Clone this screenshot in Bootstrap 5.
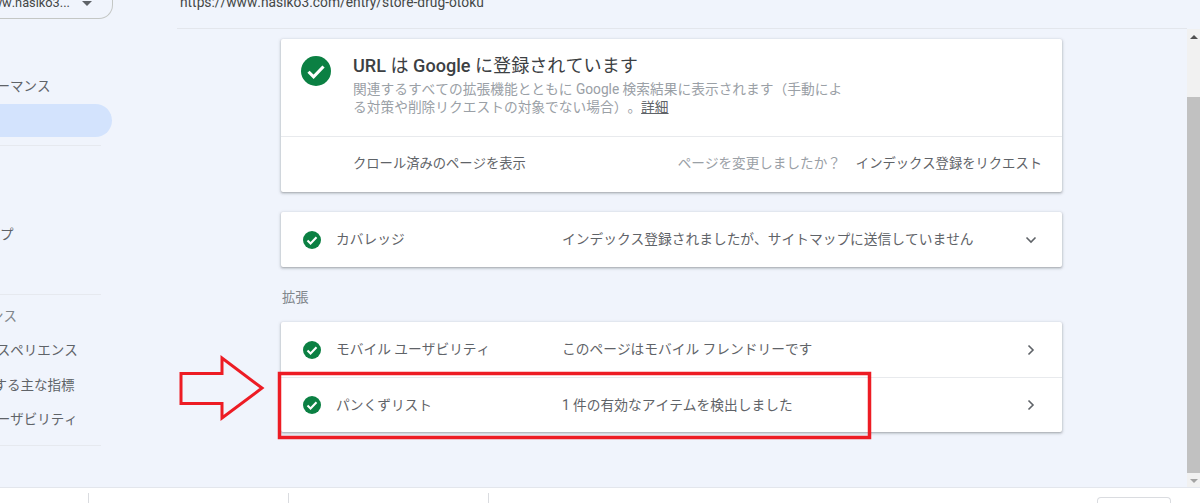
<!DOCTYPE html>
<html lang="ja">
<head>
<meta charset="utf-8">
<title>URL 検査</title>
<link rel="stylesheet" href="https://cdn.jsdelivr.net/npm/bootstrap@5.3.0/dist/css/bootstrap.min.css">
<style>
html,body{height:503px;overflow:hidden}
body{background:#f0f4fc;font-family:"Roboto","Noto Sans CJK JP",sans-serif;font-size:13.3px;color:#5f6368;text-spacing-trim:space-all;font-kerning:none}
.shell{position:relative;height:503px;overflow:hidden}
.upper{height:487px}
.sidebar{width:177px;flex:none;overflow:hidden}
.prop-select{width:113px;height:19px;border:1px solid #c4c7c5;border-left:0;border-top:0;border-bottom-right-radius:14px;font-size:12.8px;line-height:6px;color:#444746;padding-right:20px;white-space:nowrap}
.prop-text{margin-left:-60px;flex:none}
.caret{width:0;height:0;flex:none;border-left:5px solid transparent;border-right:5px solid transparent;border-top:5px solid #5f6368;margin:1px 0 0 auto}
.side-list{width:112px;margin-top:50px}
.side-row{height:34.5px;line-height:34.5px;white-space:nowrap;font-size:13.5px}
.side-row span{display:block;margin-left:-74px;color:#5f6368}
.side-row .lead-item{margin-left:-71px}
.side-row .nudge{margin-left:-67.5px}
.side-row .head{margin-left:-91px;color:#80868b}
.pill{height:33px;background:#d3e3fd;border-radius:0 17px 17px 0}
.side-rule{height:1px;background:#e6e9ef;width:101px;margin-top:8px}
.after-rule{margin-top:2px}
.mid{min-width:0}
.url-bar{height:29px;border-bottom:1px solid #e3e6ec;padding-left:3px;font-size:13.8px;line-height:4px;color:#444746;white-space:nowrap}
.col-wrap{width:781px;margin-left:104px}
.panel{background:#fff;border-radius:2px;box-shadow:0 1px 2px rgba(60,64,67,.3),0 1px 3px 1px rgba(60,64,67,.15)}
.panel-top{height:98px;padding:16px 20px 0 20px;border-bottom:1px solid #e8eaed}
.panel-foot{height:55px;padding:0 20px 2px 72px}
.big-check{width:30px;height:30px;flex:none;margin-top:1px}
.msg{margin-left:22px;width:495px}
.msg-title{font-size:18.1px;line-height:22px;color:#3c4043}
.msg-sub{font-size:13.72px;line-height:18px;color:#9aa0a6;margin-top:3px}
.msg-sub a{color:#5f6368}
.muted-q{color:#9aa0a6;margin-right:15px;font-size:13.6px}
.one-row{height:55px;padding-left:22px;padding-right:21px;font-size:13.72px}
.one-row+.one-row{border-top:1px solid #e8eaed}
.small-check{width:18px;height:18px;flex:none}
.one-name{width:226px;margin-left:15px;flex:none}
.one-val{flex:1 1 auto}
.chev{width:20px;height:20px;flex:none}
.ext-label{color:#80868b;margin:22px 0 15px 1px;line-height:18px;height:18px}
.gap-one{margin-top:20px}
.top-one{margin-top:10px}
.rail{width:13px;flex:none;background:#f1f1f1;display:flex;flex-direction:column;margin-top:29px}
.rail-head{height:68px;text-align:center}
.rail-thumb{height:376px;background:#c1c1c1}
.tri-up,.tri-down{display:block;width:0;height:0;margin:0 auto;border-left:4px solid transparent;border-right:4px solid transparent}
.tri-up{border-bottom:4px solid #505050;margin-top:6px}
.tri-down{border-top:4px solid #a3a3a3;margin-top:6px}
.foot{height:16px;background:#fff;border-top:1px solid #e3e6ec;position:relative}
.foot-cell{width:200px;height:10px;border-right:1px solid #dadce0;margin-top:5px;flex:none}
.foot-cell:first-child{width:89px}
.foot-btn{width:74px;height:12px;border:1px solid #dadce0;border-bottom:0;border-radius:4px 4px 0 0;margin:9px 29px 0 auto}
.overlay{position:absolute;left:0;top:0;width:1200px;height:503px;pointer-events:none}
</style>
</head>
<body>
<div class="shell">
  <div class="upper d-flex">
    <aside class="sidebar">
      <div class="prop-select d-flex align-items-start">
        <span class="prop-text">https://www.nasiko3...</span><span class="caret"></span>
      </div>
      <div class="side-list">
        <div class="side-row"><span class="lead-item">検索パフォーマンス</span></div>
        <div class="pill"></div>
        <div class="side-rule"></div>
        <div class="side-row after-rule"><span>&nbsp;</span></div>
        <div class="side-row"><span class="nudge">カバレッジ</span></div>
        <div class="side-row"><span class="nudge">サイトマップ</span></div>
        <div class="side-row"><span>&nbsp;</span></div>
        <div class="side-rule"></div>
        <div class="side-row mt-1"><span class="head">エクスペリエンス</span></div>
        <div class="side-row"><span>ページ エクスペリエンス</span></div>
        <div class="side-row"><span>ウェブに関する主な指標</span></div>
        <div class="side-row"><span>モバイル ユーザビリティ</span></div>
        <div class="side-rule"></div>
      </div>
    </aside>
    <main class="mid flex-grow-1">
      <div class="url-bar">https://www.nasiko3.com/entry/store-drug-otoku</div>
      <div class="col-wrap">
        <section class="panel top-one">
          <div class="panel-top d-flex align-items-start">
            <svg class="big-check" viewBox="2 2 20 20"><circle cx="12" cy="12" r="10" fill="#0b8043"/><path d="M7 12.5l3.4 3.4L17 9" fill="none" stroke="#fff" stroke-width="2.1"/></svg>
            <div class="msg">
              <div class="msg-title"><span class="fw-medium">URL</span> は <span class="fw-medium">Google</span> に登録されています</div>
              <div class="msg-sub">関連するすべての拡張機能とともに Google 検索結果に表示されます（手動による対策や削除リクエストの対象でない場合）。<a href="#">詳細</a></div>
            </div>
          </div>
          <div class="panel-foot d-flex align-items-center">
            <span>クロール済みのページを表示</span>
            <span class="muted-q ms-auto">ページを変更しましたか？</span>
            <span>インデックス登録をリクエスト</span>
          </div>
        </section>
        <section class="panel gap-one">
          <div class="one-row d-flex align-items-center">
            <svg class="small-check" viewBox="2 2 20 20"><circle cx="12" cy="12" r="10" fill="#0b8043"/><path d="M7 12.5l3.4 3.4L17 9" fill="none" stroke="#fff" stroke-width="2.3"/></svg>
            <span class="one-name">カバレッジ</span>
            <span class="one-val">インデックス登録されましたが、サイトマップに送信していません</span>
            <svg class="chev" viewBox="0 0 20 20"><path d="M5.5 7.5l4.5 4.5 4.5-4.5" fill="none" stroke="#5f6368" stroke-width="1.6"/></svg>
          </div>
        </section>
        <div class="ext-label">拡張</div>
        <section class="panel">
          <div class="one-row d-flex align-items-center">
            <svg class="small-check" viewBox="2 2 20 20"><circle cx="12" cy="12" r="10" fill="#0b8043"/><path d="M7 12.5l3.4 3.4L17 9" fill="none" stroke="#fff" stroke-width="2.3"/></svg>
            <span class="one-name">モバイル ユーザビリティ</span>
            <span class="one-val">このページはモバイル フレンドリーです</span>
            <svg class="chev" viewBox="0 0 20 20"><path d="M7.5 5.5l4.5 4.5-4.5 4.5" fill="none" stroke="#5f6368" stroke-width="1.6"/></svg>
          </div>
          <div class="one-row d-flex align-items-center">
            <svg class="small-check" viewBox="2 2 20 20"><circle cx="12" cy="12" r="10" fill="#0b8043"/><path d="M7 12.5l3.4 3.4L17 9" fill="none" stroke="#fff" stroke-width="2.3"/></svg>
            <span class="one-name">パンくずリスト</span>
            <span class="one-val">1 件の有効なアイテムを検出しました</span>
            <svg class="chev" viewBox="0 0 20 20"><path d="M7.5 5.5l4.5 4.5-4.5 4.5" fill="none" stroke="#5f6368" stroke-width="1.6"/></svg>
          </div>
        </section>
      </div>
    </main>
    <div class="rail">
      <div class="rail-head"><span class="tri-up"></span></div>
      <div class="rail-thumb"></div>
      <span class="tri-down"></span>
    </div>
  </div>
  <footer class="foot d-flex">
    <div class="foot-cell"></div>
    <div class="foot-cell"></div>
    <div class="foot-cell"></div>
    <div class="foot-btn"></div>
  </footer>
  <svg class="overlay" viewBox="0 0 1200 503">
    <polygon points="181,373.5 222,373.5 222,358 262,388 222,418 222,403.5 181,403.5" fill="none" stroke="#ed1c24" stroke-width="3"/>
    <rect x="279.5" y="373.5" width="590" height="64" fill="none" stroke="#ed1c24" stroke-width="3.5"/>
  </svg>
</div>
</body>
</html>
